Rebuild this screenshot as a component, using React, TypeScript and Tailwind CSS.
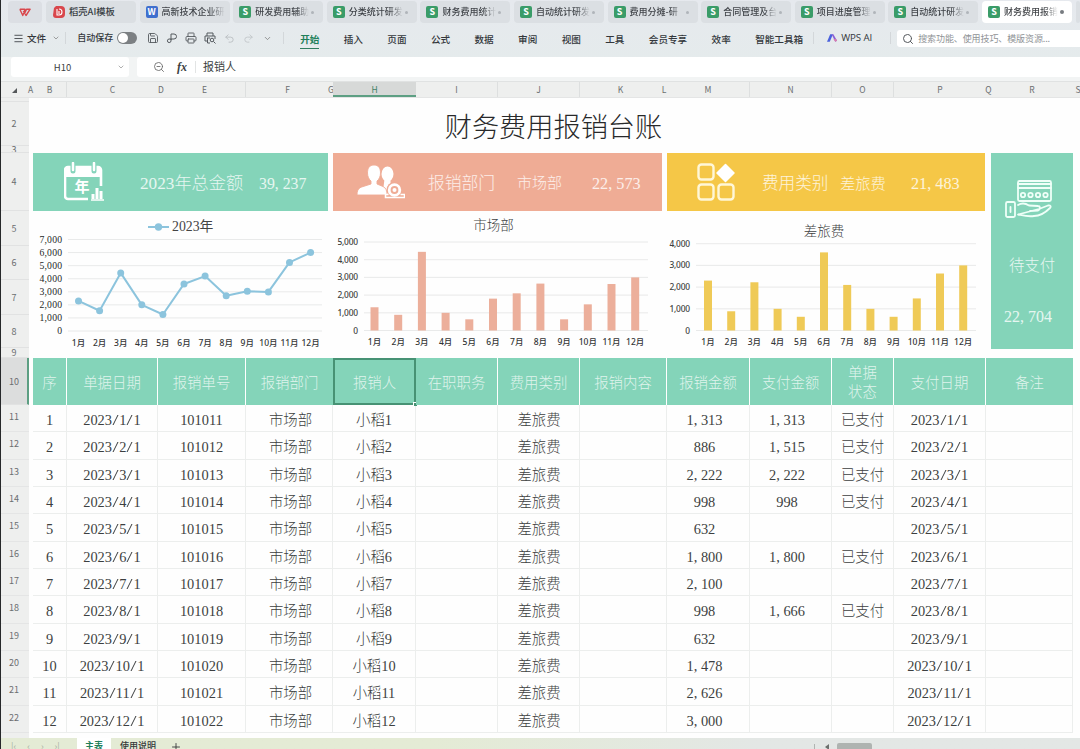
import { Fragment, type ReactNode } from 'react';
import { ChevronDown, Menu, Plus, Printer, Redo2, Save, Search, Undo2, ZoomOut } from 'lucide-react';
import clsx from 'clsx';

interface DocTab {
  title: string;
  kind: 'docer' | 'writer' | 'sheet';
  active?: boolean;
}

const docTabs: DocTab[] = [
  { title: '稻壳AI模板', kind: 'docer' },
  { title: '高新技术企业研', kind: 'writer' },
  { title: '研发费用辅助', kind: 'sheet' },
  { title: '分类统计研发', kind: 'sheet' },
  { title: '财务费用统计', kind: 'sheet' },
  { title: '自动统计研发', kind: 'sheet' },
  { title: '费用分摊-研', kind: 'sheet' },
  { title: '合同管理及台', kind: 'sheet' },
  { title: '项目进度管理', kind: 'sheet' },
  { title: '自动统计研发', kind: 'sheet' },
  { title: '财务费用报销', kind: 'sheet', active: true },
];

const menus = ['开始', '插入', '页面', '公式', '数据', '审阅', '视图', '工具', '会员专享', '效率', '智能工具箱'];

const letters: [string, string][] = [
  ['A', 'w-[5px]'], ['B', 'w-[34px] border-r'], ['C', 'w-[91px]'], ['D', 'w-[6px]'], ['E', 'w-[82px] border-r'],
  ['F', 'w-[83px]'], ['G', 'w-[4px]'], ['H', 'w-[83px]'], ['I', 'w-[82px] border-r'], ['J', 'w-[82px] border-r'],
  ['K', 'w-[81px]'], ['L', 'w-[6px]'], ['M', 'w-[83px] border-r'], ['N', 'w-[82px] border-r'], ['O', 'w-[62px] border-r'],
  ['P', 'w-[92px]'], ['Q', 'w-[5px]'], ['R', 'w-[82px]'], ['S', 'w-[10px]'],
];

const topRows: [string, string][] = [
  ['1', 'h-[4px]'], ['2', 'h-[44px]'], ['3', 'h-[7px]'], ['4', 'h-[58px]'], ['5', 'h-[35px]'],
  ['6', 'h-[34px]'], ['7', 'h-[35px]'], ['8', 'h-[33px]'], ['9', 'h-[10px]'], ['10', 'h-[47px]'],
];

const headers = ['序', '单据日期', '报销单号', '报销部门', '报销人', '在职职务', '费用类别', '报销内容', '报销金额', '支付金额', '单据\n状态', '支付日期', '备注'];

const records: [string, string][] = [
  ['1,313', '1,313'], ['886', '1,515'], ['2,222', '2,222'], ['998', '998'], ['632', ''], ['1,800', '1,800'],
  ['2,100', ''], ['998', '1,666'], ['632', ''], ['1,478', ''], ['2,626', ''], ['3,000', ''],
];

const yearTotals = [2300, 1550, 4444, 2000, 1264, 3600, 4200, 2700, 3040, 2990, 5250, 6000];
const deptTotals = [1313, 886, 4444, 998, 632, 1800, 2100, 2650, 632, 1478, 2626, 3000];
const typeTotals = [2300, 886, 2222, 998, 632, 3600, 2100, 998, 632, 1478, 2626, 3000];

const tableGrid = 'grid grid-cols-[34px_91px_88px_87px_83px_82px_82px_87px_83px_82px_62px_92px_87px]';
const serif = "font-['Liberation_Serif','Noto_Sans_CJK_SC',serif]";

// Punctuation takes the same half-em as a digit
function Fixed({ children }: { children: string }) {
  return (
    <span className="whitespace-pre">
      {children.split(/([,/])/).map((part, i) =>
        part === ',' || part === '/' ? (
          <span key={i} className={clsx('inline-block w-[0.5em]', part === '/' ? 'text-center scale-x-150' : 'text-left')}>{part}</span>
        ) : (
          <Fragment key={i}>{part}</Fragment>
        )
      )}
    </span>
  );
}

function TabIcon({ kind }: { kind: DocTab['kind'] }) {
  if (kind === 'docer') {
    return (
      <svg viewBox="0 0 12 12" className="w-[12px] h-[12px] shrink-0">
        <path d="M3 0h5a4 4 0 0 1 4 4v4a4 4 0 0 1-4 4H3a3 3 0 0 1-3-3l1-7z" fill="#d9474c" />
        <path d="M4 3v6h2c4 0 4-6 0-6M6 5v3" fill="none" stroke="#fff" strokeWidth="1.1" />
      </svg>
    );
  }
  return (
    <span className={clsx('w-[12px] h-[12px] shrink-0 rounded-[2px] text-white text-[9px] leading-[12px] text-center font-bold', kind === 'writer' ? 'bg-[#3f6fce]' : 'bg-[#3a9c68]')}>
      {kind === 'writer' ? 'W' : 'S'}
    </span>
  );
}

function TabBar() {
  return (
    <div className="h-[24px] pt-px pl-[8px] flex">
      <div className="w-[34px] h-[22px] mr-[4px] shrink-0 rounded-[4px] bg-[#dcdfe4] flex items-center justify-center">
        <svg viewBox="0 0 14 10" className="w-[12px] h-[9px]" fill="none" stroke="#d9474c" strokeWidth="1.6" strokeLinejoin="round">
          <path d="M1 1.2h6L4.4 8.5 1 1.2M5 3.5l3.2 5L13 1.2H8.8L6.5 6" />
        </svg>
      </div>
      {docTabs.map((tab, i) => (
        <div
          key={i}
          className={clsx(
            'w-[90px] h-[22px] mr-[3.6px] shrink-0 rounded-[4px] flex items-center font-medium',
            i === 0 ? 'pl-[7px] text-[9.3px]' : 'pl-[6px] text-[9px]',
            tab.active ? 'bg-white text-[#3b3e42]' : 'bg-[#dbdfe3] text-[#3a3e43]'
          )}
        >
          <TabIcon kind={tab.kind} />
          <span
            className={clsx(
              'ml-[4px] whitespace-nowrap',
              i > 1 && 'w-[54px]',
              i > 0 && 'bg-linear-to-r from-current from-75% to-transparent bg-clip-text [-webkit-text-fill-color:transparent]'
            )}
          >
            {tab.title}
          </span>
          {i > 1 && <span className={clsx('ml-[2px] shrink-0 rounded-full', tab.active ? 'w-[4px] h-[4px] bg-[#777b80]' : 'w-[3px] h-[3px] bg-[#b0b5ba]')} />}
        </div>
      ))}
      <div className="w-[20px] h-[22px] rounded-[4px] bg-[#dbdfe3]" />
    </div>
  );
}

function Toolbar() {
  const icon = 'w-[12px] h-[12px] shrink-0 text-[#555a5f]';
  return (
    <div className="h-[33px] pb-[5px] flex items-center whitespace-nowrap text-[9.6px] text-[#33373b] font-medium">
      <Menu className="ml-[13px] w-[11px] h-[11px]" strokeWidth={1.8} />
      <span className="ml-[3px]">文件</span>
      <ChevronDown className="ml-[6px] w-[8px] h-[8px] text-[#777]" />
      <div className="ml-[5px] w-px h-[12px] bg-[#d3d7da]" />
      <span className="ml-[11px] w-[36px] text-[9px]">自动保存</span>
      <div className="ml-[4px] w-[20px] h-[12px] rounded-full bg-[#7c8083] p-[1px]">
        <div className="w-[10px] h-[10px] rounded-full bg-white" />
      </div>
      <Save className={clsx(icon, 'ml-[10px]')} strokeWidth={1.8} />
      <svg viewBox="0 0 12 12" className={clsx(icon, 'ml-[7px]')} fill="none" stroke="currentColor">
        <path d="M5 8V2h3a2.3 2.3 0 0 1 0 5H3a1.8 1.8 0 1 0 2 2V7" />
      </svg>
      <Printer className={clsx(icon, 'ml-[7px]')} strokeWidth={1.8} />
      <svg viewBox="0 0 12 12" className={clsx(icon, 'ml-[7px]')} fill="none" stroke="currentColor">
        <path d="M3 4V1h6v3M4 9H1V4h10v3M3 6h3M3.5 6v5H6" />
        <circle cx="8" cy="8" r="1.8" />
        <path d="m9.5 9.5 2 2" />
      </svg>
      <Undo2 className="ml-[8px] w-[11px] h-[11px] text-[#babec2]" />
      <Redo2 className="ml-[8px] w-[11px] h-[11px] text-[#c3c7ca]" />
      <ChevronDown className="ml-[9px] w-[9px] h-[9px] text-[#777]" />
      <div className="ml-[11px] w-px h-[12px] bg-[#d3d7da]" />
      <div className="ml-[16px] w-[503px] flex justify-between">
        {menus.map((menu, i) => (
          <span key={menu} className={clsx('h-[18px] leading-[17px] mt-[3px]', i === 0 && 'text-[#21805a] font-bold border-b border-[#2f7d5e]')}>{menu}</span>
        ))}
      </div>
      <div className="ml-[10px] w-px h-[12px] bg-[#d3d7da]" />
      <svg viewBox="0 0 12 10" className="ml-[13px] w-[11px] h-[10px]">
        <path d="M0 9 3.5 1h3L3 9z" fill="#4b62dd" />
        <path d="m5 1 2 0 4 7-2 1z" fill="#8b61d6" />
        <path d="M7 6h3l1 2-2 1z" fill="#d97cae" />
      </svg>
      <span className="ml-[3px] w-[35px] text-[9.7px] tracking-[-0.1px] font-['Open_Sans',sans-serif]">WPS AI</span>
      <div className="ml-[14px] w-px h-[12px] bg-[#d3d7da]" />
      <div className="ml-[6px] mt-[1px] flex-1 h-[17px] rounded-l-[3px] bg-white flex items-center font-normal text-[9px] text-[#8f9396] overflow-hidden">
        <Search className="ml-[5px] w-[12px] h-[12px] shrink-0 text-[#55595d]" />
        <span className="ml-[4px] tracking-[-0.1px]">搜索功能、使用技巧、模版资源...</span>
      </div>
    </div>
  );
}

function FormulaBar() {
  return (
    <div className="h-[25px] flex pl-[11px] text-[#3c3f42] border-b border-[#e0e2e2] bg-[#f2f4f4]">
      <div className="w-[118px] h-[20px] rounded-[3px] bg-white flex items-center">
        <span className="w-[103px] text-center text-[9.5px]">H10</span>
        <ChevronDown className="w-[8px] h-[8px] text-[#888] ml-[3px]" />
      </div>
      <div className="ml-[8px] flex-1 h-[20px] rounded-l-[3px] bg-white flex items-center">
        <ZoomOut className="ml-[16px] w-[12px] h-[12px] text-[#666]" strokeWidth={1.7} />
        <span className="ml-[12px] text-[12px] font-bold italic font-['Liberation_Serif',serif]">fx</span>
        <div className="ml-[8px] w-px h-[12px] bg-[#e2e4e4]" />
        <span className="ml-[7px] -mt-[2px] text-[11px]">报销人</span>
      </div>
    </div>
  );
}

function ColumnLetters() {
  return (
    <div className="h-[16px] flex bg-[#eeefee] text-[8.5px] text-[#6b6e70] border-b border-[#e4e5e5]">
      <div className="w-[28px] shrink-0 flex justify-end items-end pr-[11px] pb-[4px]">
        <svg viewBox="0 0 5 5" className="w-[5px] h-[5px]"><path d="M5 0v5H0z" fill="#55585a" /></svg>
      </div>
      {letters.map(([letter, width]) => (
        <div key={letter} className={clsx(width, 'shrink-0 flex justify-center items-center border-[#dddfdf]', letter === 'H' && 'bg-[#d7d9d8] text-[#3f7f66] border-b-2 border-b-[#5d9f83] pt-[1px]')}>
          {letter}
        </div>
      ))}
    </div>
  );
}

function RowNumbers() {
  return (
    <div className="w-[28px] pr-[2px] shrink-0 bg-[#eeefee] text-[9px] text-[#6b6e70]">
      {topRows.map(([n, height]) => (
        <div key={n} className={clsx(height, '-mr-[2px] border-b border-[#e1e2e2] flex items-center justify-center overflow-hidden leading-none', n === '10' ? 'bg-[#dcdddd] border-r-2 border-r-[#5d9f83]' : 'pr-[2px]')}>
          {n === '1' ? '' : n}
        </div>
      ))}
      {records.map((_, i) => (
        <div key={i} className="h-[27.35px] -mr-[2px] pr-[2px] border-b border-[#e4e5e5] flex items-center justify-center pb-[3px]">{i + 11}</div>
      ))}
    </div>
  );
}

function CalendarIcon() {
  return (
    <svg viewBox="0 0 40 40" className="w-[40px] h-[40px]" fill="none" stroke="#fff">
      <path d="M37 24V8a3 3 0 0 0-3-3H4a3 3 0 0 0-3 3v26a3 3 0 0 0 3 3h20" strokeWidth="2.6" />
      <path d="M2 6h35v9H2z" fill="#fff" stroke="none" />
      <path d="M9 1v8M30 1v8" stroke="#86d4bb" strokeWidth="5" strokeLinecap="round" />
      <path d="M9 1v7M30 1v7" strokeWidth="2.5" strokeLinecap="round" />
      <path d="M29 37v-5M33 37V26M37 37v-8" strokeWidth="3" />
      <path d="M27 38h13" strokeWidth="1.5" />
      <text x="18" y="29.5" textAnchor="middle" fontSize="15" fontWeight="700" fill="#fff" stroke="none">年</text>
    </svg>
  );
}

function PeopleIcon() {
  return (
    <svg viewBox="0 0 48 36" className="w-[48px] h-[36px]" fill="#fff">
      <ellipse cx="30.5" cy="10" rx="6" ry="7.5" />
      <path d="M27.5 15h6v5l6 3-7 8h-7z" />
      <path d="M17 1c4.500 0 6.500 3 6.500 8 0 3.500-1.500 6.500-3.500 8v3l6 2.500c3 1.500 4 4 4 8.500H0c0-4 1-6.500 4-7.800L14 20v-3c-2-1.500-3.500-4.500-3.500-8 0-5 2-8 6.500-8z" stroke="#efac95" strokeWidth=".9" />
      <circle cx="37.500" cy="26" r="8" fill="#efac95" />
      <circle cx="37.500" cy="26" r="5.300" fill="none" stroke="#fff" strokeWidth="2.800" />
      <circle cx="37.500" cy="26" r="2" />
      <path d="M31.500 30.500h-3v3h19v-3h-4" fill="none" stroke="#fff" strokeWidth="1.500" />
    </svg>
  );
}

function BlocksIcon() {
  return (
    <svg viewBox="0 0 38 38" className="w-[38px] h-[38px]" fill="none" stroke="#fff7d8" strokeWidth="2.4">
      <rect x="1.5" y="1.5" width="15" height="15" rx="3" />
      <rect x="1.5" y="21.5" width="15" height="15" rx="3" />
      <rect x="21.5" y="21.5" width="15" height="15" rx="3" />
      <path d="m28.5 1.5 8.5 8.5-8.5 8.5L20 10z" fill="#fff" stroke="#fff" strokeWidth="1.5" strokeLinejoin="round" />
    </svg>
  );
}

function PayIcon() {
  return (
    <svg viewBox="0 0 48 40" className="w-[48px] h-[40px]" fill="none" stroke="#effff8" strokeWidth="1.8" strokeLinejoin="round" strokeLinecap="round">
      <rect x="13" y="2" width="33" height="20" rx="1.5" />
      <path d="M13 5h33M13 9h33" />
      {[18, 25.5, 33, 40.5].map((x) => <circle key={x} cx={x} cy="16" r="2.2" />)}
      <rect x="1" y="23" width="9" height="15" rx="1.5" />
      <path d="M5.5 28v5" />
      <path d="M13 26c4-2.500 8-1.500 11 .5l9 .5c2.500 0 2.500 4 0 4.500l-8 .5M34 30l9-3.500c2.500-.5 3.500 1 2 2.500-5 5-10 8-16 8-6 1-11-.5-16-1.500z" />
    </svg>
  );
}

function SummaryCard({ className, icon, children }: { className: string; icon: ReactNode; children: ReactNode }) {
  return (
    <div className={clsx('h-[58px] flex items-center text-white/80 whitespace-nowrap leading-none', serif, className)}>
      {icon}
      <div className="flex items-center pt-[4px] font-light">{children}</div>
    </div>
  );
}

interface ChartProps {
  values: number[];
  width: number;
  left: number;
  right: number;
  top: number;
  bottom: number;
  max: number;
  first: number;
  step: number;
  color: string;
  line?: boolean;
}

function Chart({ values, width, left, right, top, bottom, max, first, step, color, line }: ChartProps) {
  const y = (value: number) => bottom - (value / max) * (bottom - top);
  const x = (i: number) => first + i * step;
  const ticks = Array.from({ length: max / 1000 + 1 }, (_, i) => i * 1000);
  return (
    <svg width={width} height={138} viewBox={`0 0 ${width} 138`} className="block">
      {ticks.map((tick) => (
        <g key={tick}>
          <line x1={left} x2={right} y1={y(tick)} y2={y(tick)} stroke="#e3e5e4" strokeWidth="0.8" />
          <text
            x={left - 6}
            y={y(tick) + 3}
            textAnchor="end"
            textLength={tick ? (line ? 22.5 : 20.5) : undefined}
            className={clsx(line ? "fill-[#1c1e1f] font-['Liberation_Serif',serif] text-[9.7px]" : "fill-[#3d3f40] font-['Noto_Sans',sans-serif] text-[8.4px] font-medium")}
          >
            {tick.toLocaleString('en-US')}
          </text>
        </g>
      ))}
      {values.map((value, i) => (
        <g key={i}>
          {!line && <rect x={x(i) - 4} y={y(value)} width="8" height={bottom - y(value)} fill={color} />}
          <text x={x(i)} y={bottom + 14.5} textAnchor="middle" className="fill-[#333536] text-[8.5px] font-medium font-['Noto_Sans','Noto_Sans_CJK_SC',sans-serif]">{i + 1}月</text>
        </g>
      ))}
      {line && (
        <>
          <polyline points={values.map((value, i) => `${x(i)},${y(value)}`).join(' ')} fill="none" stroke={color} strokeWidth="2" strokeLinejoin="round" />
          {values.map((value, i) => <circle key={i} cx={x(i)} cy={y(value)} r="3.5" fill={color} />)}
        </>
      )}
    </svg>
  );
}

function Dashboard() {
  return (
    <div className="h-[205px] flex">
      <section className="w-[295px] mr-[5px]">
        <SummaryCard className="bg-[#84d4b9]" icon={<div className="ml-[31px] mr-[36px]"><CalendarIcon /></div>}>
          <span className="w-[119px] text-[17.2px]">2023年总金额</span>
          <span className="text-[15.8px]"><Fixed>39,237</Fixed></span>
        </SummaryCard>
        <div className="h-[31px] -mb-[22px] pl-[115px] flex items-center">
          <svg width="21" height="8" viewBox="0 0 21 8"><path d="M0 4h21" stroke="#8cc4dd" strokeWidth="2" /><circle cx="10.5" cy="4" r="3.7" fill="#8cc4dd" /></svg>
          <span className={clsx('ml-[3px] text-[13.8px] text-[#444] leading-none', serif)}>2023年</span>
        </div>
        <Chart values={yearTotals} width={295} left={35} right={289} top={19.5} bottom={111} max={7000} first={45.5} step={21.1} color="#8cc4dd" line />
      </section>
      <section className="w-[329px] mr-[5px]">
        <SummaryCard className="bg-[#efac95]" icon={<div className="ml-[24px] mr-[23px]"><PeopleIcon /></div>}>
          <span className="w-[89px] text-[16.8px]">报销部门</span>
          <span className="w-[75px] text-[15px]">市场部</span>
          <span className="text-[16.2px]"><Fixed>22,573</Fixed></span>
        </SummaryCard>
        <div className={clsx('h-[28px] -mb-[28px] pr-[8px] text-center text-[13.5px] leading-[29px] text-[#404243] font-light', serif)}>市场部</div>
        <Chart values={deptTotals} width={329} left={31} right={315} top={31} bottom={119.5} max={5000} first={41.5} step={23.7} color="#ecaf9b" />
      </section>
      <section className="w-[318px] mr-[6px]">
        <SummaryCard className="bg-[#f5c747]" icon={<div className="ml-[30px] mr-[27px]"><BlocksIcon /></div>}>
          <span className="w-[78px] text-[16.6px]">费用类别</span>
          <span className="w-[71px] text-[15.3px]">差旅费</span>
          <span className="text-[16.2px]"><Fixed>21,483</Fixed></span>
        </SummaryCard>
        <div className={clsx('h-[38px] -mb-[38px] pr-[4px] text-center text-[13.5px] leading-[41px] text-[#404243] font-light', serif)}>差旅费</div>
        <Chart values={typeTotals} width={318} left={29} right={309} top={32.7} bottom={119.5} max={4000} first={41} step={23.2} color="#efca57" />
      </section>
      <section className={clsx('w-[82px] h-[196px] bg-[#84d4b9] text-white/80 flex flex-col items-center leading-none pt-[26px] font-light', serif)}>
        <div className="mr-[6px]"><PayIcon /></div>
        <div className="mt-[39px] text-[15.4px]">待支付</div>
        <div className="mt-[36px] mr-[8px] text-[16px]"><Fixed>22,704</Fixed></div>
      </section>
    </div>
  );
}

function LedgerTable() {
  return (
    <div className={clsx('w-[1040px] text-[14.4px]', serif)}>
      <div className={clsx(tableGrid, 'h-[47px] text-white/75 font-light')}>
        {headers.map((header, i) => (
          <div
            key={header}
            className={clsx(
              'relative flex items-center justify-center text-center whitespace-pre leading-[19px] bg-[#84d4b9]',
              header === '报销人' ? 'border-2 border-[#479274]' : i < 12 && header !== '报销部门' && 'border-r border-white'
            )}
          >
            <span className={i === 10 ? 'pt-[2px]' : 'pt-[4px]'}>{header}</span>
            {header === '报销人' && <span className="absolute -right-[3px] -bottom-[3px] w-[4px] h-[4px] bg-[#479274] border-l border-t border-white" />}
          </div>
        ))}
      </div>
      {records.map(([amount, paid], i) => {
        const date = `2023/${i + 1}/1`;
        const cells = [`${i + 1}`, date, `${101011 + i}`, '市场部', `小稻${i + 1}`, '', '差旅费', '', amount, paid, paid && '已支付', date, ''];
        return (
          <div key={i} className={clsx(tableGrid, 'h-[27.35px] text-[#3c3f40] font-light')}>
            {cells.map((cell, col) => (
              <div
                key={col}
                className={clsx(
                  'flex items-center justify-center border-r border-b border-[#eceeed] leading-none pt-[4px]',
                  (col === 8 || col === 9) && 'pr-[7px]',
                  col === 3 && 'pl-[3px]',
                  col === 6 && 'pl-px'
                )}
              >
                <Fixed>{cell}</Fixed>
              </div>
            ))}
          </div>
        );
      })}
    </div>
  );
}

function SheetTabs() {
  return (
    <div className="h-[11px] flex bg-linear-to-r from-[#e4ebd5] from-40% to-[#e3e7e5] to-70% text-[9px] text-[#35383a] overflow-hidden">
      <div className="w-[76px] pl-[10px] pt-[2px] flex gap-[11px] text-[#a9b0a2] leading-[13px] shrink-0">
        <span>|‹</span><span>‹</span><span>›</span><span>›|</span>
      </div>
      <div className="w-[34px] h-[14px] bg-white text-center text-[#21805a] font-bold leading-[16px] shrink-0">主表</div>
      <div className="ml-[9px] w-[37px] leading-[16px] font-medium shrink-0">使用说明</div>
      <Plus className="ml-[13px] mt-[3px] w-[12px] h-[12px] shrink-0" strokeWidth={1.8} />
      <div className="ml-[632px] mt-[6px] w-px h-[5px] bg-[#b0b4b1] shrink-0" />
      <svg viewBox="0 0 4 6" className="ml-[10px] mt-[6px] w-[4px] h-[6px] shrink-0"><path d="M4 0v6L0 3z" fill="#6b706d" /></svg>
      <div className="ml-[8px] mt-[5px] w-[35px] h-[8px] rounded-[2px] bg-[#afb4b1] shrink-0" />
    </div>
  );
}

export default function App() {
  return (
    <div className="w-[1080px] h-[749px] overflow-hidden flex flex-col bg-linear-to-b from-[#e6e9ee] to-[#e5ebec] to-[60px] border-l border-[#26282a] font-['Noto_Sans_CJK_SC',sans-serif]">
      <div className="-ml-px">
        <TabBar />
        <Toolbar />
        <FormulaBar />
        <ColumnLetters />
      </div>
      <div className="-ml-px h-[640px] flex bg-white border-l border-[#26282a] overflow-hidden">
        <RowNumbers />
        <main className="flex-1 pl-[4px] bg-[#fefefe]">
          <h1 className={clsx('h-[55px] pt-[3px] pr-[6px] text-center text-[27.2px] leading-[55px] text-[#28292a] font-light', serif)}>财务费用报销台账</h1>
          <Dashboard />
          <LedgerTable />
        </main>
      </div>
      <SheetTabs />
    </div>
  );
}
